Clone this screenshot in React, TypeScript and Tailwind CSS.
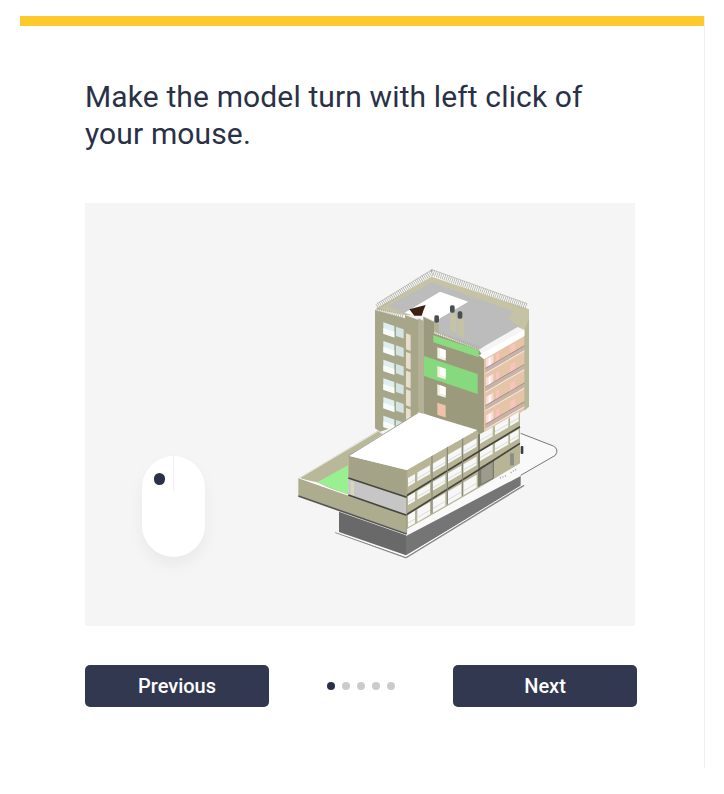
// 724x794 onboarding step: instruction, model preview, pager
const SLOPE = -0.58;

// parallelogram on the right-hand facade, y given at x0 and following the slope
function facadeQuad(x0: number, x1: number, y0: number, h: number) {
  const y1 = y0 + (x1 - x0) * SLOPE;
  return `${x0},${y0} ${x1},${y1} ${x1},${y1 + h} ${x0},${y0 + h}`;
}

// same thing on the left-hand faces, which fall towards the right
function leftQuad(x0: number, x1: number, y0: number, h: number, slope = 0.34) {
  const y1 = y0 + (x1 - x0) * slope;
  return `${x0},${y0} ${x1},${y1} ${x1},${y1 + h} ${x0},${y0 + h}`;
}

const towerRows = [217, 273, 329, 385, 441, 497];
const balconyRows = [328, 384, 440, 496];
const lowBays = [
  [384, 405],
  [412, 450],
  [458, 496],
  [504, 544],
  [550, 590],
];
const lowRows = [
  [684, 26],
  [739, 26],
  [794, 38],
];
const sideBays = [
  [600, 638],
  [645, 685],
  [690, 716],
];

function Building() {
  return (
    <svg viewBox="0 0 900 960" className="absolute left-[195px] top-[47px] h-[320px] w-[300px]">
      {/* ground slab and basement */}
      <path d="M722 550 L820 588 Q838 598 826 616 L722 676 L400 858 L370 846 Z" fill="#f9f9f9" />
      <path d="M722 550 L820 588 Q838 598 826 616 L722 676" fill="none" stroke="#777" strokeWidth="3" />
      <polygon points="177,785 177,846 378,916 378,856" fill="#696969" />
      <polygon points="378,858 378,916 722,712 722,678" fill="#757575" />
      <polyline points="166,847 378,923 732,706" fill="none" stroke="#8a8a8a" strokeWidth="5" />
      <polyline points="166,845 378,919 732,702" fill="none" stroke="#fff" strokeWidth="3" />

      {/* tower, left and middle faces */}
      <polygon points="285,180 375,205 375,195 430,215 430,500 300,545 285,535" fill="#a8a689" />
      <polygon points="430,200 462,215 462,250 597,300 612,325 612,550 597,552 430,490" fill="#9c9a7d" />
      <polygon points="415,205 430,212 430,490 415,485" fill="#b4b296" />
      {towerRows.map((y) => (
        <g key={y}>
          <polygon points={leftQuad(310, 343, y, 34)} fill="#dfeeee" />
          <polygon points={leftQuad(310, 343, y + 17, 17)} fill="#f7fbfb" />
          <polygon points={leftQuad(348, 371, y + 13, 28)} fill="#d3e4e4" />
          <polygon points={leftQuad(378, 392, y + 33, 48)} fill="#e6dfcd" />
        </g>
      ))}
      <polygon points="460,256 596,300 596,322 460,277" fill="#8bdc7e" />
      <polygon points="432,318 593,372 593,432 432,378" fill="#86d97c" />
      {[292, 348, 403].map((y) => (
        <g key={y}>
          <polygon points={leftQuad(472, 497, y, 32)} fill="#f4efe3" />
          <polygon points={leftQuad(480, 497, y + 3, 24)} fill="#fff" />
        </g>
      ))}
      <polygon points={leftQuad(472, 497, 458, 36)} fill="#f0c2ac" />

      {/* tower, balcony facade */}
      <polygon points="612,325 735,255 735,478 720,490 612,552" fill="#e6c4a8" />
      {balconyRows.map((y) => (
        <g key={y}>
          <polygon points={facadeQuad(618, 640, y, 32)} fill="#fbdcd8" />
          <polygon points={facadeQuad(626, 632, y - 3, 32)} fill="#fff" />
          <polygon points={facadeQuad(648, 658, y - 16, 32)} fill="#f8c4bc" />
          <polygon points={facadeQuad(690, 706, y - 40, 32)} fill="#f8c4bc" />
          <polygon points={facadeQuad(616, 735, y + 27, 14)} fill="#c9b3a8" />
          <polygon points={facadeQuad(616, 735, y + 26, 2)} fill="#8d8078" />
          <polygon points={facadeQuad(616, 735, y + 41, 3)} fill="#f3eee3" />
        </g>
      ))}
      <polygon points="733,210 747,180 747,470 733,482" fill="#b8b698" />
      <polygon points="597,316 733,240 733,258 612,328" fill="#fff" />

      {/* roof */}
      <polygon points="285,178 455,80 747,178 747,205 733,240 700,225 597,300 462,245 462,212 430,198 375,195" fill="#c5c3a3" />
      <polygon points="322,168 456,97 700,184 684,208 718,228 597,298 462,240 462,212 430,196 372,190" fill="#bcbcbc" />
      <polygon points="374,188 480,125 565,155 480,205 470,216 428,197 402,197" fill="#fff" />
      <polyline points="291,170 456,68 742,170" fill="none" stroke="#a8a8a0" strokeWidth="18" strokeDasharray="2 4" />
      <polyline points="291,161 456,59 742,161" fill="none" stroke="#b0b0a8" strokeWidth="2" />
      <polyline points="291,180 372,200" fill="none" stroke="#a8a8a0" strokeWidth="12" strokeDasharray="2 4" />
      <polyline points="464,248 596,294" fill="none" stroke="#a8a8a0" strokeWidth="12" strokeDasharray="2 4" />
      <polygon points="388,178 437,165 430,182 425,197 403,197 396,188" fill="#3c2012" />
      <polygon points="510,190 530,196 530,248 510,242" fill="#c5c3a6" />
      <polygon points="534,205 552,210 552,262 534,256" fill="#c5c3a6" />
      <polygon points="462,216 476,222 476,250 462,244" fill="#b3b194" />
      <rect x="510" y="166" width="14" height="22" rx="5" fill="#4a4f50" />
      <rect x="533" y="184" width="14" height="22" rx="5" fill="#4a4f50" />
      <rect x="463" y="196" width="14" height="22" rx="5" fill="#4a4f50" />

      {/* low block, facade */}
      <polygon points="380,660 590,540 597,553 720,490 720,640 600,712 380,838" fill="#b7b596" />
      {lowRows.map(([y, h]) =>
        lowBays.map(([a, b]) => (
          <g key={`${y}-${a}`}>
            <polygon points={facadeQuad(a, b, y + (a - 384) * SLOPE, h)} fill="#f7f7f6" />
            <polygon points={facadeQuad(a, b, y + (a - 384) * SLOPE + h * 0.62, 3)} fill="#d5dbe3" />
          </g>
        )),
      )}
      {[553, 605].map((y) =>
        sideBays.map(([a, b]) => (
          <g key={`${y}-${a}`}>
            <polygon points={facadeQuad(a, b, y + (a - 600) * SLOPE, 28)} fill="#f7f7f6" />
            <polygon points={facadeQuad(a, b, y + (a - 600) * SLOPE + 17, 3)} fill="#d5dbe3" />
          </g>
        )),
      )}
      <polygon points="602,652 640,632 640,685 602,705" fill="#9b9b8e" stroke="#55554c" strokeWidth="2" />
      <rect x="690" y="610" width="12" height="36" fill="#8c8f86" />
      <polyline points="378,738 595,605 720,530" fill="none" stroke="#45453f" strokeWidth="5" />
      <polyline points="378,795 595,660 720,580" fill="none" stroke="#45453f" strokeWidth="5" />
      {[456, 502, 548].map((x) => (
        <line key={x} x1={x} y1={612 + (456 - x) * 0.58} x2={x} y2={790 - (x - 456) * 0.58} stroke="#7d8075" strokeWidth="3" />
      ))}
      <line x1="597" y1="552" x2="597" y2="710" stroke="#45453f" strokeWidth="3" />
      <rect x="722" y="588" width="8" height="24" rx="3" fill="#3d3d3d" />
      <polyline points="660,684 670,680 682,676" fill="none" stroke="#a9a9a9" strokeWidth="5" strokeDasharray="3 5" />
      <polyline points="692,668 712,656" fill="none" stroke="#a9a9a9" strokeWidth="5" strokeDasharray="3 5" />

      {/* terrace and fascia */}
      <polygon points="55,685 292,543 308,552 205,617 205,740 112,697" fill="#bab89a" />
      <polygon points="112,697 205,645 205,735" fill="#98f090" />
      <polyline points="57,685 205,736" fill="none" stroke="#fff" strokeWidth="4" />
      <polyline points="57,685 292,545" fill="none" stroke="#fff" strokeWidth="2" />
      <polygon points="205,683 380,742 380,796 205,738" fill="#c6c6c6" />
      <polygon points="212,692 222,696 222,738 212,735" fill="#d8d6be" />
      <polygon points="55,685 205,737 380,796 380,850 55,738" fill="#aeac8f" />
      <polyline points="55,738 380,852" fill="none" stroke="#555" strokeWidth="5" />
      <polyline points="205,735 380,796" fill="none" stroke="#45453f" strokeWidth="5" />
      <line x1="380" y1="660" x2="380" y2="850" stroke="#8c8a6f" strokeWidth="2" />

      {/* low block, top and front */}
      <polygon points="205,617 380,660 380,742 205,684" fill="#a5a387" />
      <polyline points="205,684 380,742" fill="none" stroke="#45453f" strokeWidth="5" />
      <polygon points="207,617 415,487 592,540 380,660" fill="#fff" />
      <polyline points="205,618 415,488" fill="none" stroke="#77755f" strokeWidth="2" />
    </svg>
  );
}

function Mouse() {
  return (
    <div className="absolute left-[57px] top-[253px] h-[101px] w-[63px] rounded-full bg-white shadow-[0_8px_16px_rgba(0,0,0,0.05)]">
      <div className="absolute left-[31px] top-0 h-[35px] w-px bg-[#f6eef3]" />
      <div className="absolute left-[12px] top-[17px] h-[12px] w-[11px] rounded-full bg-[#2a3147]" />
    </div>
  );
}

export default function App() {
  return (
    <div className="h-[794px] w-[724px] bg-white pl-5 pt-4 font-['Roboto',sans-serif]">
      <div className="h-[752px] w-[685px] border-r border-[#f1f1f1]">
        <div className="h-2.5 w-[684px] bg-[#fdc92b]" />
        <div className="pl-[65px] pt-[52px]">
          <h1 className="w-[520px] text-[30px] font-normal leading-[37px] tracking-[0.13px] text-[#2a3147]">
            Make the model turn with left click of your mouse.
          </h1>
          <div className="relative mt-[51px] h-[423px] w-[550px] bg-[#f5f5f5]">
            <Building />
            <Mouse />
          </div>
          <div className="mt-[39px] flex w-[552px] items-center justify-between">
            <button className="h-[42px] w-[184px] rounded-[5px] bg-[#323850] text-[20px] font-medium text-white">Previous</button>
            <div className="flex gap-[7px]">
              <span className="size-2 rounded-full bg-[#2a3147]" />
              <span className="size-2 rounded-full bg-[#cbcbcb]" />
              <span className="size-2 rounded-full bg-[#cbcbcb]" />
              <span className="size-2 rounded-full bg-[#cbcbcb]" />
              <span className="size-2 rounded-full bg-[#cbcbcb]" />
            </div>
            <button className="h-[42px] w-[184px] rounded-[5px] bg-[#323850] text-[20px] font-medium text-white">Next</button>
          </div>
        </div>
      </div>
    </div>
  );
}
